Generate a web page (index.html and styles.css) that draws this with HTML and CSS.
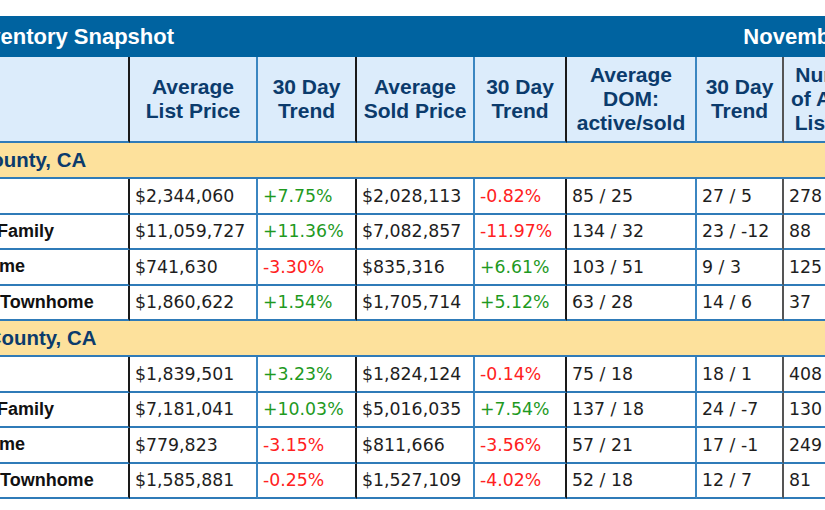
FILE: index.html
```html
<!DOCTYPE html>
<html lang="en">
<head>
<meta charset="utf-8">
<title>Inventory Snapshot</title>
<link rel="stylesheet" href="styles.css">
</head>
<body>
<div class="sheet">
  <div class="titlebar">
    <span class="title">Bay Area Inventory Snapshot</span>
    <span class="date">November 2019</span>
  </div>
  <table class="grid">
    <colgroup>
      <col class="c-label">
      <col class="c-list">
      <col class="c-trend1">
      <col class="c-sold">
      <col class="c-trend2">
      <col class="c-dom">
      <col class="c-trend3">
      <col class="c-num">
      <col class="c-trend4">
    </colgroup>
    <thead>
      <tr class="head">
        <th class="sep"></th>
        <th>Average<br>List Price</th>
        <th class="sep">30 Day<br>Trend</th>
        <th>Average<br>Sold Price</th>
        <th class="sep">30 Day<br>Trend</th>
        <th>Average<br>DOM:<br>active/sold</th>
        <th class="sep2">30 Day<br>Trend</th>
        <th>Number<br>of Active<br>Listings</th>
        <th>30 Day<br>Trend</th>
      </tr>
    </thead>
    <tbody>
      <tr class="band"><td colspan="9">San Mateo County, CA</td></tr>
      <tr>
        <td class="label sep">All</td>
        <td>$2,344,060</td>
        <td class="up sep">+7.75%</td>
        <td>$2,028,113</td>
        <td class="down sep">-0.82%</td>
        <td>85 / 25</td>
        <td class="sep2">27 / 5</td>
        <td>278</td>
        <td></td>
      </tr>
      <tr>
        <td class="label sep">Single Family</td>
        <td>$11,059,727</td>
        <td class="up sep">+11.36%</td>
        <td>$7,082,857</td>
        <td class="down sep">-11.97%</td>
        <td>134 / 32</td>
        <td class="sep2">23 / -12</td>
        <td>88</td>
        <td></td>
      </tr>
      <tr>
        <td class="label sep">Mfg Home</td>
        <td>$741,630</td>
        <td class="down sep">-3.30%</td>
        <td>$835,316</td>
        <td class="up sep">+6.61%</td>
        <td>103 / 51</td>
        <td class="sep2">9 / 3</td>
        <td>125</td>
        <td></td>
      </tr>
      <tr>
        <td class="label sep">Condo/Townhome</td>
        <td>$1,860,622</td>
        <td class="up sep">+1.54%</td>
        <td>$1,705,714</td>
        <td class="up sep">+5.12%</td>
        <td>63 / 28</td>
        <td class="sep2">14 / 6</td>
        <td>37</td>
        <td></td>
      </tr>
      <tr class="band"><td colspan="9">Santa Clara County, CA</td></tr>
      <tr>
        <td class="label sep">All</td>
        <td>$1,839,501</td>
        <td class="up sep">+3.23%</td>
        <td>$1,824,124</td>
        <td class="down sep">-0.14%</td>
        <td>75 / 18</td>
        <td class="sep2">18 / 1</td>
        <td>408</td>
        <td></td>
      </tr>
      <tr>
        <td class="label sep">Single Family</td>
        <td>$7,181,041</td>
        <td class="up sep">+10.03%</td>
        <td>$5,016,035</td>
        <td class="up sep">+7.54%</td>
        <td>137 / 18</td>
        <td class="sep2">24 / -7</td>
        <td>130</td>
        <td></td>
      </tr>
      <tr>
        <td class="label sep">Mfg Home</td>
        <td>$779,823</td>
        <td class="down sep">-3.15%</td>
        <td>$811,666</td>
        <td class="down sep">-3.56%</td>
        <td>57 / 21</td>
        <td class="sep2">17 / -1</td>
        <td>249</td>
        <td></td>
      </tr>
      <tr>
        <td class="label sep">Condo/Townhome</td>
        <td>$1,585,881</td>
        <td class="down sep">-0.25%</td>
        <td>$1,527,109</td>
        <td class="down sep">-4.02%</td>
        <td>52 / 18</td>
        <td class="sep2">12 / 7</td>
        <td>81</td>
        <td></td>
      </tr>
    </tbody>
  </table>
</div>
</body>
</html>
```
FILE: styles.css
```css
html, body {
  margin: 0;
  padding: 0;
  background: #ffffff;
  overflow: hidden;
}

body {
  width: 825px;
  height: 510px;
}

.sheet {
  width: 1114px;
  margin-top: 16px;
  margin-left: -139px;
}

.titlebar {
  display: flex;
  align-items: center;
  justify-content: space-between;
  height: 41px;
  padding: 0 69px 0 7px;
  background: #0063a0;
  color: #ffffff;
  font-family: "Liberation Sans", Arial, sans-serif;
  font-weight: bold;
  font-size: 22px;
}

.grid {
  width: 1114px;
  table-layout: fixed;
  border-collapse: separate;
  border-spacing: 0;
}

.c-label { width: 269px; }
.c-list { width: 128px; }
.c-trend1 { width: 99px; }
.c-sold { width: 118px; }
.c-trend2 { width: 92px; }
.c-dom { width: 130px; }
.c-trend3 { width: 87px; }
.c-num { width: 104px; }
.c-trend4 { width: 87px; }

.grid th,
.grid td {
  box-sizing: border-box;
  border-right: 2px solid #3b86c1;
  border-bottom: 2px solid #2f7bb8;
  padding: 0 0 0 5px;
  white-space: nowrap;
  overflow: hidden;
}

.grid th.sep,
.grid td.sep {
  border-right-color: #1a1a1a;
}

.grid th.sep2,
.grid td.sep2 {
  border-right-color: #555555;
}

.head th {
  height: 86px;
  padding: 0;
  background: #dcecfb;
  color: #0b3b6c;
  font-family: "Liberation Sans", Arial, sans-serif;
  font-weight: bold;
  font-size: 21px;
  line-height: 24px;
  text-align: center;
  vertical-align: middle;
}

.band td {
  height: 36px;
  padding-left: 8px;
  background: #fde19c;
  border-right: none;
  color: #0b3b6c;
  font-family: "Liberation Sans", Arial, sans-serif;
  font-weight: bold;
  font-size: 20.4px;
  vertical-align: middle;
}

tbody tr td {
  height: 35.5px;
  font-family: "DejaVu Sans", Verdana, sans-serif;
  font-size: 17.33px;
  color: #1e1e1e;
  vertical-align: middle;
}

tbody td.label {
  padding-left: 77px;
  font-family: "Liberation Sans", Arial, sans-serif;
  font-weight: bold;
  font-size: 18px;
  color: #111111;
}

tbody td.up {
  color: #1f9a1f;
}

tbody td.down {
  color: #ff2121;
}
```
